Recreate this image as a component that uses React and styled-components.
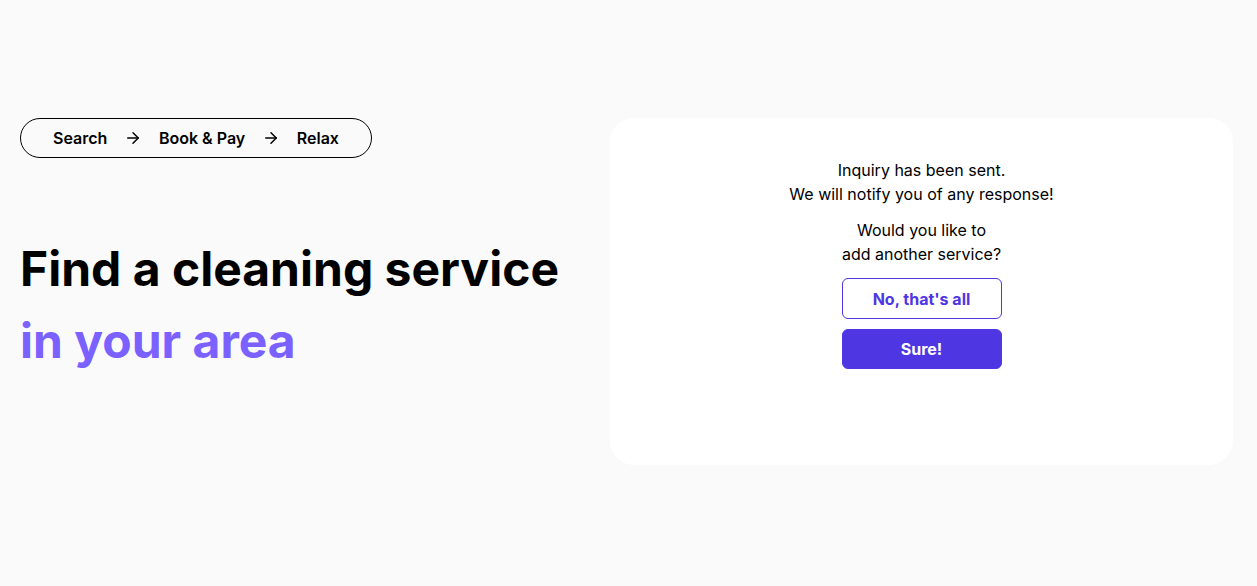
import React from "react";
import styled, { createGlobalStyle } from "styled-components";

const Global = createGlobalStyle`
  html, body { margin: 0; padding: 0; background: #fafafa; }
  body { font-family: Inter, "Noto Sans", sans-serif; color: #000; }
  * { box-sizing: border-box; }
`;

const Page = styled.main`
  min-height: 586px;
  display: grid;
  grid-template-columns: 1fr 623px;
  column-gap: 20px;
  padding: 118px 24px 0 20px;
  align-items: start;
`;

const Left = styled.section`
  display: flex;
  flex-direction: column;
  align-items: flex-start;
`;

const Steps = styled.div`
  display: flex;
  align-items: center;
  height: 40px;
  width: 352px;
  padding: 0 32px;
  justify-content: space-between;
  border: 1px solid #000;
  border-radius: 20px;
  font-size: 16px;
  font-weight: 600;
`;

const Step = styled.span`
  white-space: nowrap;
`;

const Arrow = () => (
  <svg width="18" height="18" viewBox="0 0 24 24" fill="none" stroke="#000" strokeWidth="2" strokeLinecap="round" strokeLinejoin="round">
    <path d="M5 12h14" />
    <path d="M12 5l7 7-7 7" />
  </svg>
);

const Title = styled.h1`
  margin: 75px 0 0;
  font-size: 48px;
  line-height: 72px;
  font-weight: 700;
  letter-spacing: 0;
  color: #000;
`;

const Accent = styled.span`
  color: #7b61ff;
`;

const Card = styled.section`
  background: #fff;
  border-radius: 24px;
  height: 347px;
  padding-top: 40px;
  display: flex;
  flex-direction: column;
  align-items: center;
`;

const Text = styled.p`
  margin: 0 0 12px;
  font-size: 16px;
  line-height: 24px;
  text-align: center;
  color: #000;
`;

const Buttons = styled.div`
  display: flex;
  flex-direction: column;
  gap: 10px;
  width: 160px;
`;

const Button = styled.button`
  font-family: Inter, "Noto Sans", sans-serif;
  font-size: 16px;
  font-weight: 700;
  height: ${(p) => (p.$primary ? "40px" : "41px")};
  border-radius: 6px;
  cursor: pointer;
  border: 1px solid #4f36e3;
  background: ${(p) => (p.$primary ? "#4f36e3" : "#fff")};
  color: ${(p) => (p.$primary ? "#fff" : "#4f36e3")};
`;

export default function App() {
  return (
    <>
      <Global />
      <Page>
        <Left>
          <Steps>
            <Step>Search</Step>
            <Arrow />
            <Step>Book &amp; Pay</Step>
            <Arrow />
            <Step>Relax</Step>
          </Steps>
          <Title>
            Find a cleaning service
            <br />
            <Accent>in your area</Accent>
          </Title>
        </Left>
        <Card>
          <Text>
            Inquiry has been sent.
            <br />
            We will notify you of any response!
          </Text>
          <Text>
            Would you like to
            <br />
            add another service?
          </Text>
          <Buttons>
            <Button>No, that's all</Button>
            <Button $primary>Sure!</Button>
          </Buttons>
        </Card>
      </Page>
    </>
  );
}
